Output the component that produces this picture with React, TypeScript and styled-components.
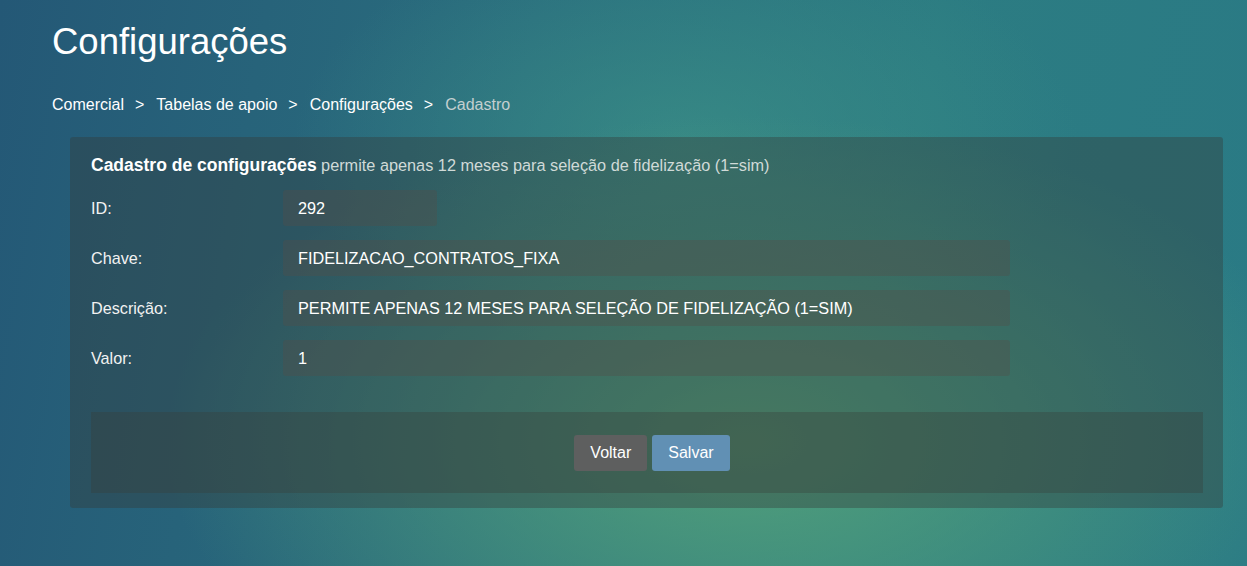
import { FC } from "react"
import styled, { createGlobalStyle } from "styled-components"

const GlobalStyle = createGlobalStyle`
  html, body {
    margin: 0;
    padding: 0;
    height: 100%;
  }
  body {
    font-family: "Liberation Sans", Arial, sans-serif;
    color: #fff;
    background-color: #2f7a80;
    background-image:
      radial-gradient(ellipse 65% 80% at 60% 78%, rgba(84, 162, 122, 0.95), rgba(84, 162, 122, 0) 72%),
      radial-gradient(ellipse 45% 55% at 55% 25%, rgba(60, 145, 135, 0.7), rgba(60, 145, 135, 0) 70%),
      linear-gradient(100deg, #245876 0%, #2a6e7e 40%, #2c7c82 70%, #2a7a85 100%);
    min-height: 566px;
  }
`

interface Crumb {
  label: string
  current?: boolean
}

const crumbs: Crumb[] = [
  { label: "Comercial" },
  { label: "Tabelas de apoio" },
  { label: "Configurações" },
  { label: "Cadastro", current: true },
]

interface Field {
  label: string
  value: string
  width: string
}

const fields: Field[] = [
  { label: "ID:", value: "292", width: "154px" },
  { label: "Chave:", value: "FIDELIZACAO_CONTRATOS_FIXA", width: "727px" },
  {
    label: "Descrição:",
    value: "PERMITE APENAS 12 MESES PARA SELEÇÃO DE FIDELIZAÇÃO (1=SIM)",
    width: "727px",
  },
  { label: "Valor:", value: "1", width: "727px" },
]

const App: FC = () => {
  return (
    <Page>
      <GlobalStyle />
      <Title>Configurações</Title>
      <Breadcrumb>
        {crumbs.map((c, i) => (
          <CrumbItem key={c.label} $current={c.current}>
            {i > 0 && <Sep>&gt;</Sep>}
            {c.label}
          </CrumbItem>
        ))}
      </Breadcrumb>
      <Card>
        <CardHeader>
          <strong>Cadastro de configurações</strong>{" "}
          <span>permite apenas 12 meses para seleção de fidelização (1=sim)</span>
        </CardHeader>
        <Form>
          {fields.map((f) => (
            <Row key={f.label}>
              <Label>{f.label}</Label>
              <Input $width={f.width} defaultValue={f.value} readOnly />
            </Row>
          ))}
        </Form>
        <Footer>
          <Button $variant="back">Voltar</Button>
          <Button $variant="save">Salvar</Button>
        </Footer>
      </Card>
    </Page>
  )
}

export default App

const Page = styled.div`
  padding: 20px 24px 40px 52px;
`

const Title = styled.h1`
  margin: 0;
  font-size: 36.5px;
  font-weight: 400;
  line-height: 44px;
  color: #fff;
`

const Breadcrumb = styled.div`
  display: flex;
  margin-top: 30px;
  font-size: 16px;
  line-height: 22px;
`

const CrumbItem = styled.span<{ $current?: boolean }>`
  color: ${({ $current }) => ($current ? "#c3cfd0" : "#fff")};
`

const Sep = styled.span`
  color: #fff;
  margin: 0 12px 0 11px;
`

const Card = styled.div`
  margin: 21px 0 0 18px;
  background: rgba(52, 58, 56, 0.38);
  border-radius: 3px;
  padding: 18px 20px 15px 21px;
`

const CardHeader = styled.div`
  line-height: 20px;
  strong {
    font-size: 17.5px;
    font-weight: 700;
    color: #fff;
  }
  span {
    font-size: 16.3px;
    color: #d0dad8;
  }
`

const Form = styled.div`
  display: flex;
  flex-direction: column;
  gap: 14px;
  margin-top: 14px;
`

const Row = styled.div`
  display: flex;
  align-items: center;
`

const Label = styled.label`
  width: 192px;
  font-size: 16.2px;
  color: #f2f2f2;
`

const Input = styled.input<{ $width: string }>`
  width: ${({ $width }) => $width};
  box-sizing: border-box;
  height: 36px;
  padding: 0 15px;
  border: none;
  border-radius: 3px;
  background: rgba(82, 78, 72, 0.36);
  color: #fff;
  font-family: "Liberation Sans", Arial, sans-serif;
  font-size: 16.25px;
  outline: none;
`

const Footer = styled.div`
  margin-top: 36px;
  height: 81px;
  background: rgba(55, 62, 56, 0.34);
  display: flex;
  align-items: center;
  justify-content: center;
  gap: 5px;
  padding-left: 10px;
`

const Button = styled.button<{ $variant: "back" | "save" }>`
  height: 36px;
  padding: 0 16px;
  border: none;
  border-radius: 3px;
  font-family: "Liberation Sans", Arial, sans-serif;
  font-size: 16px;
  color: #fff;
  background: ${({ $variant }) => ($variant === "save" ? "#6190b4" : "#5e5f5f")};
  cursor: pointer;
`
